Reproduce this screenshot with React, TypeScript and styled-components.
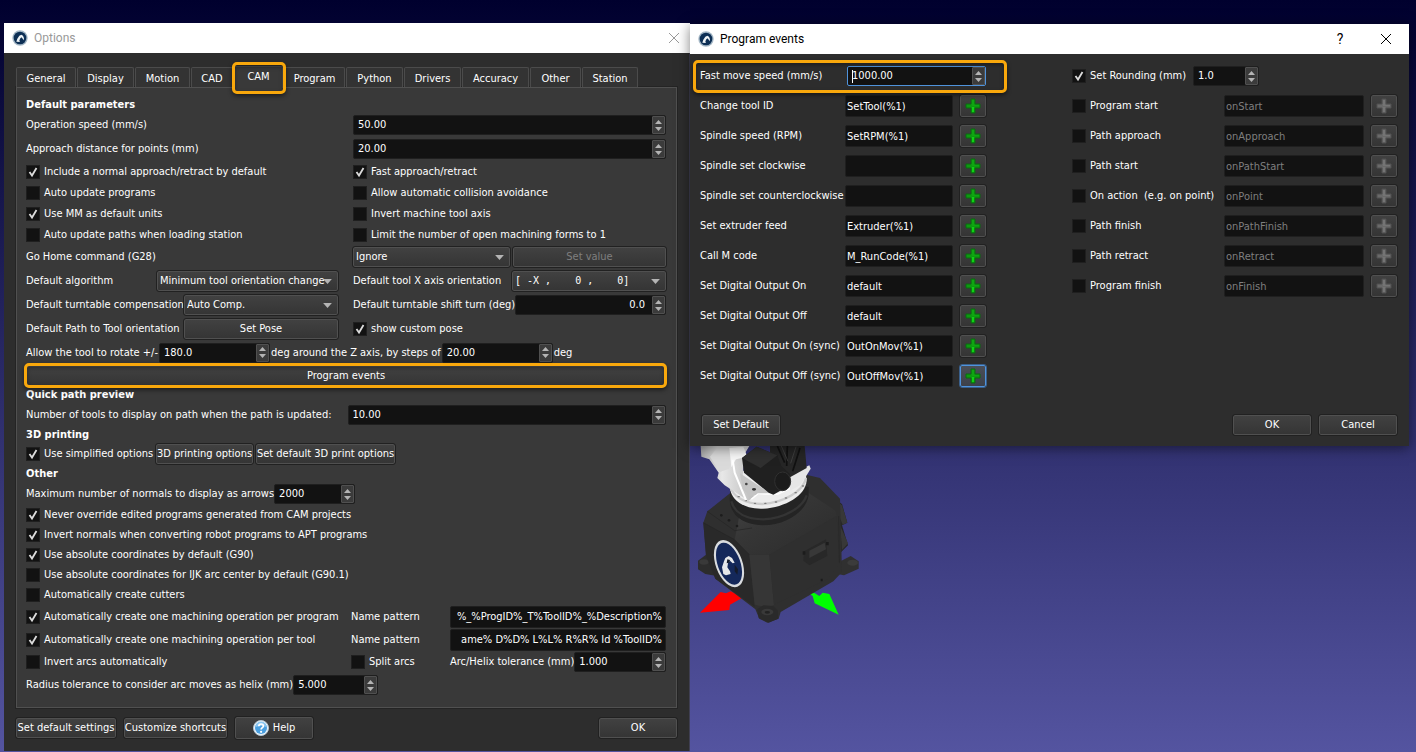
import React, { useEffect, useId, useRef } from "react";
import styled, { createGlobalStyle, css } from "styled-components";

const UI_FONT = `"DejaVu Sans Condensed", "DejaVu Sans", sans-serif`;
const TITLE_FONT = `Roboto, "Open Sans", sans-serif`;
const MONO_FONT = `"DejaVu Sans Mono", monospace`;
const ORANGE = "#f9a80c";

const GlobalStyle = createGlobalStyle`
  *, *::before, *::after { box-sizing: border-box; }
  body { margin: 0; background: #5353a0; }
  button, input, select { font: inherit; color: inherit; margin: 0; }
`;

/* ---------- desktop and windows ---------- */

const Desktop = styled.div`
  display: flex;
  align-items: flex-start;
  min-height: 100vh;
  padding: 23px 7px 1px 4px;
  background: linear-gradient(#00002e, #5454a0);
  font: 11px/14px ${UI_FONT};
  color: #fff;
  white-space: nowrap;
  overflow: hidden;
`;

const RightSide = styled.div`
  flex: 719 1 0;
  min-width: 0;
  padding-top: 1px;
`;

const Window = styled.section<{ $front?: boolean }>`
  position: relative;
  background: #2d2d2d;
  ${(p) =>
    p.$front
      ? css`
          z-index: 1;
          box-shadow: 0 2px 12px rgba(0, 0, 0, 0.5);
        `
      : css`
          flex: 686 1 0;
          min-width: 0;
          box-shadow: inset -1px 0 #3f3f52;
        `}
`;

const TitleBar = styled.header<{ $dim?: boolean }>`
  display: flex;
  align-items: center;
  height: 30px;
  padding: 0 ${(p) => (p.$dim ? 8 : 0)}px 0 8px;
  gap: 6px;
  background: #fff;
  color: ${(p) => (p.$dim ? "#999" : "#000")};
  font: 12px/16px ${TITLE_FONT};
`;

const Title = styled.h1`
  flex: 1;
  margin: 0;
  font: inherit;
`;

const TitleButtons = styled.div`
  display: flex;
`;

const TitleButton = styled.button<{ $wide?: boolean }>`
  display: grid;
  place-items: center;
  width: ${(p) => (p.$wide ? 46 : 16)}px;
  height: 28px;
  padding: 0;
  border: 0;
  background: none;
  font-size: ${(p) => (p.$wide ? 14 : 12)}px;
`;

/* ---------- controls ---------- */

const fieldFrame = css`
  background: #121212;
  border: 1px solid #1f1f1f;
  border-radius: 2px;
`;

const Button = styled.button<{ $width?: number; $tall?: boolean; $fill?: boolean }>`
  display: flex;
  align-items: center;
  justify-content: center;
  gap: 4px;
  flex: ${(p) => (p.$fill ? "1 1 0" : "none")};
  width: ${(p) => (p.$width ? `${p.$width}px` : "auto")};
  height: ${(p) => (p.$tall ? 22 : 20)}px;
  min-width: 0;
  padding: 0;
  border: 1px solid #505050;
  border-radius: 2px;
  outline: 1px solid #212121;
  background: linear-gradient(#414141, #353535);
  &:disabled {
    color: #7f7f7f;
  }
`;

const PlusFrame = styled(Button)<{ $active?: boolean }>`
  width: 26px;
  height: 22px;
  ${(p) =>
    p.$active &&
    css`
      border-color: #4f93dc;
      background: linear-gradient(#4a4e58, #3d414a);
      outline-color: #3a5f8a;
    `}
`;

const TextInput = styled.input<{ $end?: boolean }>`
  ${fieldFrame}
  width: 100%;
  min-width: 0;
  height: 22px;
  padding: 0 ${(p) => (p.$end ? 3 : 1)}px 0 ${(p) => (p.$end ? 0 : 1)}px;
  text-align: ${(p) => (p.$end ? "right" : "left")};
  &:disabled {
    color: #7f7f7f;
  }
`;

const SpinFrame = styled.span<{ $width?: number; $focused?: boolean }>`
  ${fieldFrame}
  display: flex;
  flex: ${(p) => (p.$width ? "none" : "1 1 0")};
  width: ${(p) => (p.$width ? `${p.$width}px` : "auto")};
  min-width: 0;
  height: 20px;
  ${(p) => p.$focused && `border-color: #4f93dc;`}
`;

const SpinInput = styled.input<{ $right?: boolean; $caret?: boolean }>`
  flex: 1;
  width: 0;
  min-width: 0;
  padding: 0 ${(p) => (p.$right ? 7 : 0)}px 0 4px;
  border: 0;
  background: ${(p) =>
    p.$caret ? "linear-gradient(#fff, #fff) 4px 50% / 1px 13px no-repeat" : "none"};
  text-align: ${(p) => (p.$right ? "right" : "left")};
`;

const Stepper = styled.span`
  display: flex;
  flex-direction: column;
  justify-content: center;
  width: 13px;
  border: 1px solid #505050;
  border-radius: 1px;
  background: #3b3b3b;
`;

const StepButton = styled.button`
  display: grid;
  place-items: center;
  height: 7px;
  padding: 0;
  border: 0;
  background: none;
`;

const SelectFrame = styled.span<{ $width?: number }>`
  display: grid;
  align-items: center;
  flex: ${(p) => (p.$width ? "none" : "1 1 0")};
  width: ${(p) => (p.$width ? `${p.$width}px` : "auto")};
  min-width: 0;
  > * {
    grid-area: 1 / 1;
  }
  > svg {
    justify-self: end;
    margin-right: 6px;
    pointer-events: none;
  }
`;

const NativeSelect = styled.select<{ $mono?: boolean }>`
  appearance: none;
  width: 100%;
  height: 20px;
  padding: 0 0 0 2px;
  border: 1px solid #505050;
  border-radius: 2px;
  outline: 1px solid #212121;
  background: linear-gradient(#414141, #353535);
  ${(p) => p.$mono && `font: 10px/14px ${MONO_FONT};`}
`;

const CheckLabel = styled.label`
  display: flex;
  align-items: center;
  gap: 4px;
  min-width: 0;
`;

const CheckBox = styled.span`
  display: grid;
  flex: none;
  > * {
    grid-area: 1 / 1;
  }
  > input {
    appearance: none;
    width: 14px;
    height: 14px;
    background: #121212;
    border: 1px solid #1f1f1f;
  }
  > svg {
    visibility: hidden;
    pointer-events: none;
  }
  > input:checked + svg {
    visibility: visible;
  }
`;

const Highlight = styled.span<{ $inset: string }>`
  position: absolute;
  inset: ${(p) => p.$inset};
  border: 3px solid ${ORANGE};
  border-radius: 5px;
  box-shadow: 0 2px 4px rgba(0, 0, 0, 0.5), inset 0 2px 4px rgba(0, 0, 0, 0.35);
  pointer-events: none;
`;

/* ---------- options window parts ---------- */

const OptionsBody = styled.div`
  padding: 13px 13px 12px 12px;
`;

const TabList = styled.nav`
  display: flex;
  align-items: flex-end;
  gap: 1px;
`;

const Tab = styled.button<{ $active?: boolean; $width: number }>`
  position: relative;
  width: ${(p) => p.$width}px;
  height: ${(p) => (p.$active ? 22 : 20)}px;
  padding: ${(p) => (p.$active ? "0 0 2px" : "2px 0 0")};
  border: 1px solid #4b4b4b;
  border-bottom: 0;
  border-radius: 2px 2px 0 0;
  background: ${(p) => (p.$active ? "#393939" : "#333")};
  z-index: ${(p) => (p.$active ? 1 : 0)};
  margin-bottom: ${(p) => (p.$active ? -1 : 0)}px;
`;

const Panel = styled.div`
  padding: 8px 10px 10px 9px;
  border: 1px solid #505050;
  outline: 1px solid #242424;
  background: #393939;
`;

const Row = styled.div<{ $h: number; $gap?: number; $cols?: string }>`
  position: relative;
  display: ${(p) => (p.$cols ? "grid" : "flex")};
  grid-template-columns: ${(p) => p.$cols ?? "none"};
  align-items: center;
  gap: ${(p) => p.$gap ?? 0}px;
  height: ${(p) => p.$h}px;
`;

const Heading = styled.h2<{ $h: number }>`
  margin: 0;
  font: bold 11px/${(p) => p.$h}px ${UI_FONT};
`;

const Cell = styled.div<{ $gap?: number; $spread?: boolean; $pad?: boolean }>`
  display: flex;
  align-items: center;
  min-width: 0;
  gap: ${(p) => p.$gap ?? 0}px;
  justify-content: ${(p) => (p.$spread ? "space-between" : "flex-start")};
  padding-right: ${(p) => (p.$pad ? 15 : 0)}px;
`;

const Fixed = styled.div<{ $width: number }>`
  flex: none;
  width: ${(p) => p.$width}px;
`;

const Footer = styled.footer`
  display: flex;
  align-items: center;
  gap: 8px;
  padding-top: 9px;
`;

const Spacer = styled.span`
  flex: 1;
`;

/* ---------- program events parts ---------- */

const EventsBody = styled.div`
  padding: 7px 12px 11px 10px;
`;

const EventColumns = styled.div`
  display: grid;
  grid-template-columns: 286fr 86fr 325fr;
`;

const EventRow = styled.div<{ $labels: number }>`
  display: grid;
  grid-template-columns: ${(p) => p.$labels}px 1fr 33px;
  align-items: center;
  justify-items: stretch;
  height: 30px;
  > button {
    justify-self: end;
  }
`;

const EventsFooter = styled.footer`
  display: flex;
  gap: 8px;
  padding: 24px 0 0 2px;
`;

/* ---------- drawings ---------- */

const Logo = () => (
  <svg width="16" height="16" viewBox="0 0 48 48" aria-hidden="true">
    <circle cx="24" cy="24" r="23" fill="#a3b6c5" />
    <circle cx="24" cy="24" r="19" fill="#0d2f55" />
    <path d="M13 35l3-9 6-9 6-3 5 3 3 8-1 6-4-6-3-3-4 4-2 6 2 4z" fill="#eef3f6" />
  </svg>
);

const CloseIcon = () => (
  <svg width="12" height="12" viewBox="0 0 12 12" fill="none" stroke="currentColor" aria-hidden="true">
    <path d="M1 1l10 10M11 1L1 11" />
  </svg>
);

const Up = () => (
  <svg width="7" height="4" viewBox="0 0 7 4" aria-hidden="true">
    <path d="M3.500 0L7 4H0z" fill="#b4b4b4" />
  </svg>
);

const Down = ({ width = 7 }: { width?: number }) => (
  <svg width={width} height={width === 7 ? 4 : 5} viewBox="0 0 7 4" aria-hidden="true">
    <path d="M0 0h7L3.500 4z" fill="#b4b4b4" />
  </svg>
);

const PlusIcon = ({ off }: { off?: boolean }) => (
  <svg width="16" height="16" viewBox="0 0 16 16" aria-hidden="true">
    <path
      d="M6 1h4v5h5v4h-5v5H6v-5H1V6h5z"
      fill={off ? "#696969" : "#0d9a10"}
      stroke={off ? "#505050" : "#0b6a10"}
    />
    <path d="M7 2h2v5h5v1H7z" fill={off ? "#747474" : "#0fa512"} />
    <path d="M7 9h2v5H7z" fill={off ? "#747474" : "#0fd413"} />
  </svg>
);

const HelpIcon = () => (
  <svg width="16" height="16" viewBox="0 0 16 16" aria-hidden="true">
    <circle cx="8" cy="8" r="7.500" fill="#eef4f9" stroke="#b8c8d4" />
    <circle cx="8" cy="8" r="6" fill="#4a9fdf" />
    <path d="M2.500 7a5.500 5.500 0 0 1 11 0c-3-1.500-8-1.500-11 0z" fill="#8ac6f0" />
    <path d="M5.800 6.300c0-3 4.600-3 4.600-.3 0 1.700-2.300 1.700-2.300 3.600" fill="none" stroke="#fff" strokeWidth="1.700" />
    <circle cx="8.100" cy="11.800" r="1.100" fill="#fff" />
  </svg>
);

const RobotSvg = styled.svg`
  display: block;
`;

const Robot = () => (
  <RobotSvg width="180" height="184" viewBox="0 18 540 552" role="img" aria-label="Robot">
    <defs>
      <linearGradient id="face" x1="0" x2="1" y1="0" y2="1">
        <stop offset="0" stopColor="#474747" />
        <stop offset="0.400" stopColor="#363636" />
        <stop offset="1" stopColor="#2b2b2b" />
      </linearGradient>
      <linearGradient id="metal" x1="0" x2="1" y1="0" y2="0">
        <stop offset="0" stopColor="#a9a9a9" />
        <stop offset="0.400" stopColor="#e8e8e8" />
        <stop offset="1" stopColor="#bdbdbd" />
      </linearGradient>
    </defs>
    {/* axis arrows */}
    <path d="M146 466l-24-12-14 6-16-4-62 62 88-8 2-16 36-20z" fill="#f00" />
    <path d="M354 458l14 10 6 22 72 34-28-62-20-4-10 10-16-10z" fill="#0f0" />
    {/* feet and rear parts */}
    <path d="M24 362l24-18 34 8 20 60-56-10-22-14z" fill="#2c2c2c" />
    <path d="M440 370l42-22 24 16v22l-44 20-32-6z" fill="#303030" />
    <ellipse cx="488" cy="368" rx="16" ry="9" fill="#3b3b3b" />
    <ellipse cx="42" cy="366" rx="14" ry="8" fill="#393939" />
    <path d="M340 150l40-12 18 12 4 24 20 10 12-6 22 14 16 56-16 8 18 60-24 24-30-40z" fill="#272727" />
    <path d="M438 182l18 14 16 52-14 6-20-50zM450 256l24 54-18 20z" fill="#383838" />
    {/* housing */}
    <path d="M120 160L52 214l-12 34 8 98 28 70 120 92 12 28 24 12 34-12 6-20 158-92 26-28-6-220-60-62-60-14z" fill="#2f2f2f" />
    <path d="M134 300l44 44 60 0 202-116-4-16-90-60-192 44z" fill="url(#face)" />
    <path d="M40 248l92 50 46 46 16 156L76 416 48 346z" fill="#292929" />
    <path d="M178 344h60l14 150-14 10-44-10z" fill="#363636" />
    <path d="M238 344l202-116 8 144-36 46-160 76z" fill="#2f2f2f" />
    <path d="M40 248l92 50 46 46M52 214l82 58 52-8M446 228l2 140" fill="none" stroke="#242424" strokeWidth="2" />
    <path d="M202 508l18-12 30 2 14 14v24l-28 12-30-14z" fill="#2a2a2a" />
    <ellipse cx="232" cy="516" rx="18" ry="10" fill="#393939" />
    <ellipse cx="232" cy="517" rx="8" ry="4" fill="#222" />
    <path d="M342 334l66-36 4 50-54 28-18-14z" fill="#282828" />
    <path d="M358 332l46-24 4 20-50 26z" fill="#383838" />
    <path d="M338 334h8v10h-8zM408 306h8v10h-8zM392 416h6v8h-6z" fill="#1c1c1c" />
    <path d="M120 166c-6 50 28 88 98 90 74 0 132-44 138-90l0-26H122z" fill="#242424" />
    <path d="M124 184c10 36 46 54 96 54 64-2 118-36 130-72" fill="none" stroke="#343434" strokeWidth="7" />
    <g fill="#1c1c1c">
      <circle cx="94" cy="226" r="4" />
      <circle cx="117" cy="241" r="4" />
      <circle cx="141" cy="258" r="4" />
    </g>
    {/* turntable ring */}
    <path d="M120 144c4 38 44 64 98 62 70-4 128-40 132-84l-4-30H118z" fill="#ececec" />
    <path d="M120 138c8 32 46 54 96 54 66-4 124-38 132-78" fill="none" stroke="#cdcdcd" strokeWidth="7" />
    <g fill="#777">
      <ellipse cx="146" cy="170" rx="4" ry="2" />
      <ellipse cx="168" cy="182" rx="4" ry="2" />
      <ellipse cx="195" cy="190" rx="4" ry="2" />
      <ellipse cx="226" cy="190" rx="4" ry="2" />
      <ellipse cx="258" cy="186" rx="4" ry="2" />
      <ellipse cx="288" cy="174" rx="4" ry="2" />
      <ellipse cx="317" cy="158" rx="4" ry="2" />
      <ellipse cx="339" cy="138" rx="4" ry="2" />
    </g>
    {/* arm */}
    <path d="M32 18h134l-8 90 34 60-16 14-72-46-22-22 4-16-28-40-24-8z" fill="url(#metal)" />
    <path d="M86 18h92l-18 30-34 8-8 30-28 10-30-46z" fill="#dadada" />
    <path d="M118 24l42-4 12 30-34 8-14 24z" fill="#f8f8f8" />
    <path d="M128 60l6 38 34 82" fill="none" stroke="#fff" strokeWidth="6" />
    <path d="M150 100l90 60-60 8-22-20z" fill="#c4c4c4" />
    <circle cx="169" cy="132" r="4" fill="#444" />
    <ellipse cx="192" cy="148" rx="6" ry="4" fill="#333" />
    <path d="M184 178l20-16h60l52-24 30-40" fill="none" stroke="#fff" strokeWidth="4" />
    <path d="M300 104l58-28 4 10-12 20-20 30-30 16z" fill="#e6e6e6" />
    {/* motors */}
    <path d="M240 18h104l6 66-50 28-60-50z" fill="#262626" />
    <path d="M262 18l22 50M292 18l-2 60M330 24l-22 70" stroke="#111" strokeWidth="5" />
    <path d="M274 18l20 46M318 20l-16 50" stroke="#4a4a4a" strokeWidth="2" />
    <path d="M156 54l44-34 62 26 12 32 26 24v34l-50 28-14-6-74-60z" fill="#202020" />
    <path d="M156 54l44-34 62 26-50 38z" fill="#303030" />
    <ellipse cx="278" cy="124" rx="24" ry="28" fill="#1b1b1b" stroke="#303030" strokeWidth="3" />
    {/* round badge */}
    <ellipse cx="117" cy="371" rx="40" ry="74" transform="rotate(-20 117 371)" fill="#d9dcdf" />
    <ellipse cx="117" cy="371" rx="34" ry="66" transform="rotate(-20 117 371)" fill="#14285a" />
    <path d="M96 382l6-18 4-10 10-6 10 6 8 14-6 2-8-8-6 8-2 12 8 12 2 8-14 4-8-4z" fill="#e6e8ea" />
    <path d="M112 358l8 2-2 8-8 2zM134 374l10 14-2 16-8-10z" fill="#151b2a" />
  </RobotSvg>
);

/* ---------- composed controls ---------- */

const Check = ({ text, on }: { text: string; on?: boolean }) => (
  <CheckLabel>
    <CheckBox>
      <input type="checkbox" defaultChecked={on} />
      <svg width="14" height="14" viewBox="0 0 14 14" aria-hidden="true">
        <path d="M3.500 7l2.500 3.500L10.500 3" fill="none" stroke="#dcdcdc" strokeWidth="1.800" />
      </svg>
    </CheckBox>
    {text}
  </CheckLabel>
);

type SpinProps = { id?: string; label?: string; value: string; width?: number; right?: boolean; focused?: boolean };

const Spin = ({ id, label, value, width, right, focused }: SpinProps) => (
  <SpinFrame $width={width} $focused={focused}>
    <SpinInput id={id} aria-label={label} defaultValue={value} inputMode="decimal" $right={right} $caret={focused} />
    <Stepper>
      <StepButton aria-label="Increase"><Up /></StepButton>
      <StepButton aria-label="Decrease"><Down /></StepButton>
    </Stepper>
  </SpinFrame>
);

const LabeledSpin = ({ text, ...spin }: SpinProps & { text: string }) => {
  const id = useId();
  return (
    <>
      <label htmlFor={id}>{text}</label>
      <Spin id={id} {...spin} />
    </>
  );
};

const Select = ({ id, label, value, width, mono }: { id?: string; label?: string; value: string; width?: number; mono?: boolean }) => (
  <SelectFrame $width={width}>
    <NativeSelect id={id} aria-label={label} $mono={mono} defaultValue={value}>
      <option value={value}>{value}</option>
    </NativeSelect>
    <Down width={9} />
  </SelectFrame>
);

const LabeledSelect = ({ text, ...rest }: { text: string; value: string; width?: number; mono?: boolean }) => {
  const id = useId();
  return (
    <>
      <label htmlFor={id}>{text}</label>
      <Select id={id} {...rest} />
    </>
  );
};

/* Keeps the end of a long pattern in view. */
const PatternField = ({ value }: { value: string }) => {
  const id = useId();
  const ref = useRef<HTMLInputElement>(null);
  useEffect(() => {
    if (ref.current) ref.current.scrollLeft = ref.current.scrollWidth;
  }, []);
  return (
    <>
      <label htmlFor={id}>Name pattern</label>
      <TextInput id={id} ref={ref} defaultValue={value} $end />
    </>
  );
};

/* ---------- windows ---------- */

const HALVES = "327fr 313fr";
const THIRDS = "325fr 99fr 216fr";

const tabs: [string, number][] = [
  ["General", 60], ["Display", 57], ["Motion", 55], ["CAD", 42], ["CAM", 49], ["Program", 61],
  ["Python", 57], ["Drivers", 57], ["Accuracy", 67], ["Other", 51], ["Station", 56],
];

const topChecks: [string, boolean, string, boolean][] = [
  ["Include a normal approach/retract by default", true, "Fast approach/retract", true],
  ["Auto update programs", false, "Allow automatic collision avoidance", false],
  ["Use MM as default units", true, "Invert machine tool axis", false],
  ["Auto update paths when loading station", false, "Limit the number of open machining forms to 1", false],
];

const otherChecks: [string, boolean][] = [
  ["Never override edited programs generated from CAM projects", true],
  ["Invert normals when converting robot programs to APT programs", true],
  ["Use absolute coordinates by default (G90)", true],
  ["Use absolute coordinates for IJK arc center by default (G90.1)", false],
  ["Automatically create cutters", false],
];

const SpeedRow = ({ text, value }: { text: string; value: string }) => {
  const id = useId();
  return (
    <Row $h={24} $cols={HALVES}>
      <label htmlFor={id}>{text}</label>
      <Cell><Spin id={id} value={value} /></Cell>
    </Row>
  );
};

const OptionsWindow = () => (
  <Window>
    <TitleBar $dim>
      <Logo />
      <Title>Options</Title>
      <TitleButton aria-label="Close"><CloseIcon /></TitleButton>
    </TitleBar>
    <OptionsBody>
      <TabList>
        {tabs.map(([name, width]) => (
          <Tab key={name} $active={name === "CAM"} $width={width}>
            {name}
            {name === "CAM" && <Highlight $inset="-5px -4px -6px -3px" />}
          </Tab>
        ))}
      </TabList>
      <Panel>
        <Heading $h={17}>Default parameters</Heading>
        <SpeedRow text="Operation speed (mm/s)" value="50.00" />
        <SpeedRow text="Approach distance for points (mm)" value="20.00" />
        {topChecks.map(([a, aOn, b, bOn]) => (
          <Row key={a} $h={21} $cols={HALVES}>
            <Check text={a} on={aOn} />
            <Check text={b} on={bOn} />
          </Row>
        ))}
        <Row $h={24} $cols={HALVES}>
          <span>Go Home command (G28)</span>
          <Cell $gap={3}>
            <Select label="Go Home command" value="Ignore" width={157} />
            <Button $fill disabled>Set value</Button>
          </Cell>
        </Row>
        <Row $h={24} $cols={HALVES}>
          <Cell $spread $pad><LabeledSelect text="Default algorithm" value="Minimum tool orientation change" width={181} /></Cell>
          <Cell $spread><LabeledSelect text="Default tool X axis orientation" value={"[ -X ,    0 ,    0]".replace(/ /g, "\u00a0")} width={154} mono /></Cell>
        </Row>
        <Row $h={24} $cols={HALVES}>
          <Cell $spread $pad><LabeledSelect text="Default turntable compensation" value="Auto Comp." width={154} /></Cell>
          <Cell $spread><LabeledSpin text="Default turntable shift turn (deg)" value="0.0" right /></Cell>
        </Row>
        <Row $h={24} $cols={HALVES}>
          <Cell $spread $pad>
            <span>Default Path to Tool orientation</span>
            <Button $width={154}>Set Pose</Button>
          </Cell>
          <Check text="show custom pose" on />
        </Row>
        <Row $h={23} $gap={1}>
          <LabeledSpin text="Allow the tool to rotate +/-" value="180.0" width={111} />
          <LabeledSpin text="deg around the Z axis, by steps of" value="20.00" width={111} />
          <span>deg</span>
        </Row>
        <Row $h={23}>
          <Button $fill>Program events</Button>
          <Highlight $inset="-1px -1px -1px -2px" />
        </Row>
        <Heading $h={16}>Quick path preview</Heading>
        <Row $h={23} $gap={16}>
          <LabeledSpin text="Number of tools to display on path when the path is updated:" value="10.00" />
        </Row>
        <Heading $h={17}>3D printing</Heading>
        <Row $h={22} $gap={3}>
          <Fixed $width={127}><Check text="Use simplified options" on /></Fixed>
          <Button $width={97}>3D printing options</Button>
          <Button $width={139}>Set default 3D print options</Button>
        </Row>
        <Heading $h={18}>Other</Heading>
        <Row $h={22}>
          <LabeledSpin text="Maximum number of normals to display as arrows" value="2000" width={81} />
        </Row>
        {otherChecks.map(([text, on]) => (
          <Row key={text} $h={20}><Check text={text} on={on} /></Row>
        ))}
        <Row $h={23} $cols={THIRDS}>
          <Check text="Automatically create one machining operation per program" on />
          <PatternField value="%_%ProgID%_T%ToolID%_%Description%" />
        </Row>
        <Row $h={23} $cols={THIRDS}>
          <Check text="Automatically create one machining operation per tool" on />
          <PatternField value="ame% D%D% L%L% R%R% Id %ToolID%" />
        </Row>
        <Row $h={22} $cols={THIRDS}>
          <Check text="Invert arcs automatically" />
          <Check text="Split arcs" />
          <Cell><LabeledSpin text="Arc/Helix tolerance (mm)" value="1.000" /></Cell>
        </Row>
        <Row $h={24}>
          <LabeledSpin text="Radius tolerance to consider arc moves as helix (mm)" value="5.000" width={85} />
        </Row>
      </Panel>
      <Footer>
        <Button $width={100}>Set default settings</Button>
        <Button $width={103}>Customize shortcuts</Button>
        <Button $width={78} $tall><HelpIcon />Help</Button>
        <Spacer />
        <Button $width={78}>OK</Button>
      </Footer>
    </OptionsBody>
  </Window>
);

const commands: [string, string][] = [
  ["Change tool ID", "SetTool(%1)"],
  ["Spindle speed (RPM)", "SetRPM(%1)"],
  ["Spindle set clockwise", ""],
  ["Spindle set counterclockwise", ""],
  ["Set extruder feed", "Extruder(%1)"],
  ["Call M code", "M_RunCode(%1)"],
  ["Set Digital Output On", "default"],
  ["Set Digital Output Off", "default"],
  ["Set Digital Output On (sync)", "OutOnMov(%1)"],
  ["Set Digital Output Off (sync)", "OutOffMov(%1)"],
];

const hooks: [string, string][] = [
  ["Program start", "onStart"],
  ["Path approach", "onApproach"],
  ["Path start", "onPathStart"],
  ["On action \u00a0(e.g. on point)", "onPoint"],
  ["Path finish", "onPathFinish"],
  ["Path retract", "onRetract"],
  ["Program finish", "onFinish"],
];

const FastMoveRow = styled(Row)`
  > label {
    flex: 1;
  }
`;

const CommandRow = ({ text, value, active }: { text: string; value: string; active: boolean }) => {
  const id = useId();
  return (
    <EventRow $labels={145}>
      <label htmlFor={id}>{text}</label>
      <TextInput id={id} defaultValue={value} />
      <PlusFrame $active={active} aria-label={`Add to ${text}`}><PlusIcon /></PlusFrame>
    </EventRow>
  );
};

const EventsWindow = () => (
  <Window $front>
    <TitleBar>
      <Logo />
      <Title>Program events</Title>
      <TitleButtons>
        <TitleButton $wide aria-label="Help">?</TitleButton>
        <TitleButton $wide aria-label="Close"><CloseIcon /></TitleButton>
      </TitleButtons>
    </TitleBar>
    <EventsBody>
      <EventColumns>
        <div>
          <FastMoveRow $h={30}>
            <LabeledSpin text="Fast move speed (mm/s)" value="1000.00" width={139} focused />
            <Highlight $inset="-1px -21px -2px -7px" />
          </FastMoveRow>
          {commands.map(([text, value], i) => (
            <CommandRow key={text} text={text} value={value} active={i === commands.length - 1} />
          ))}
        </div>
        <div />
        <div>
          <Row $h={30}>
            <Fixed $width={121}><Check text="Set Rounding (mm)" on /></Fixed>
            <Spin label="Rounding" value="1.0" width={66} />
          </Row>
          {hooks.map(([text, value]) => (
            <EventRow key={text} $labels={152}>
              <Check text={text} />
              <TextInput aria-label={text} defaultValue={value} disabled />
              <PlusFrame disabled aria-label={`Add to ${text}`}><PlusIcon off /></PlusFrame>
            </EventRow>
          ))}
        </div>
      </EventColumns>
      <EventsFooter>
        <Button $width={78}>Set Default</Button>
        <Spacer />
        <Button $width={78}>OK</Button>
        <Button $width={78}>Cancel</Button>
      </EventsFooter>
    </EventsBody>
  </Window>
);

export default function App() {
  return (
    <>
      <GlobalStyle />
      <Desktop>
        <OptionsWindow />
        <RightSide>
          <EventsWindow />
          <Robot />
        </RightSide>
      </Desktop>
    </>
  );
}
